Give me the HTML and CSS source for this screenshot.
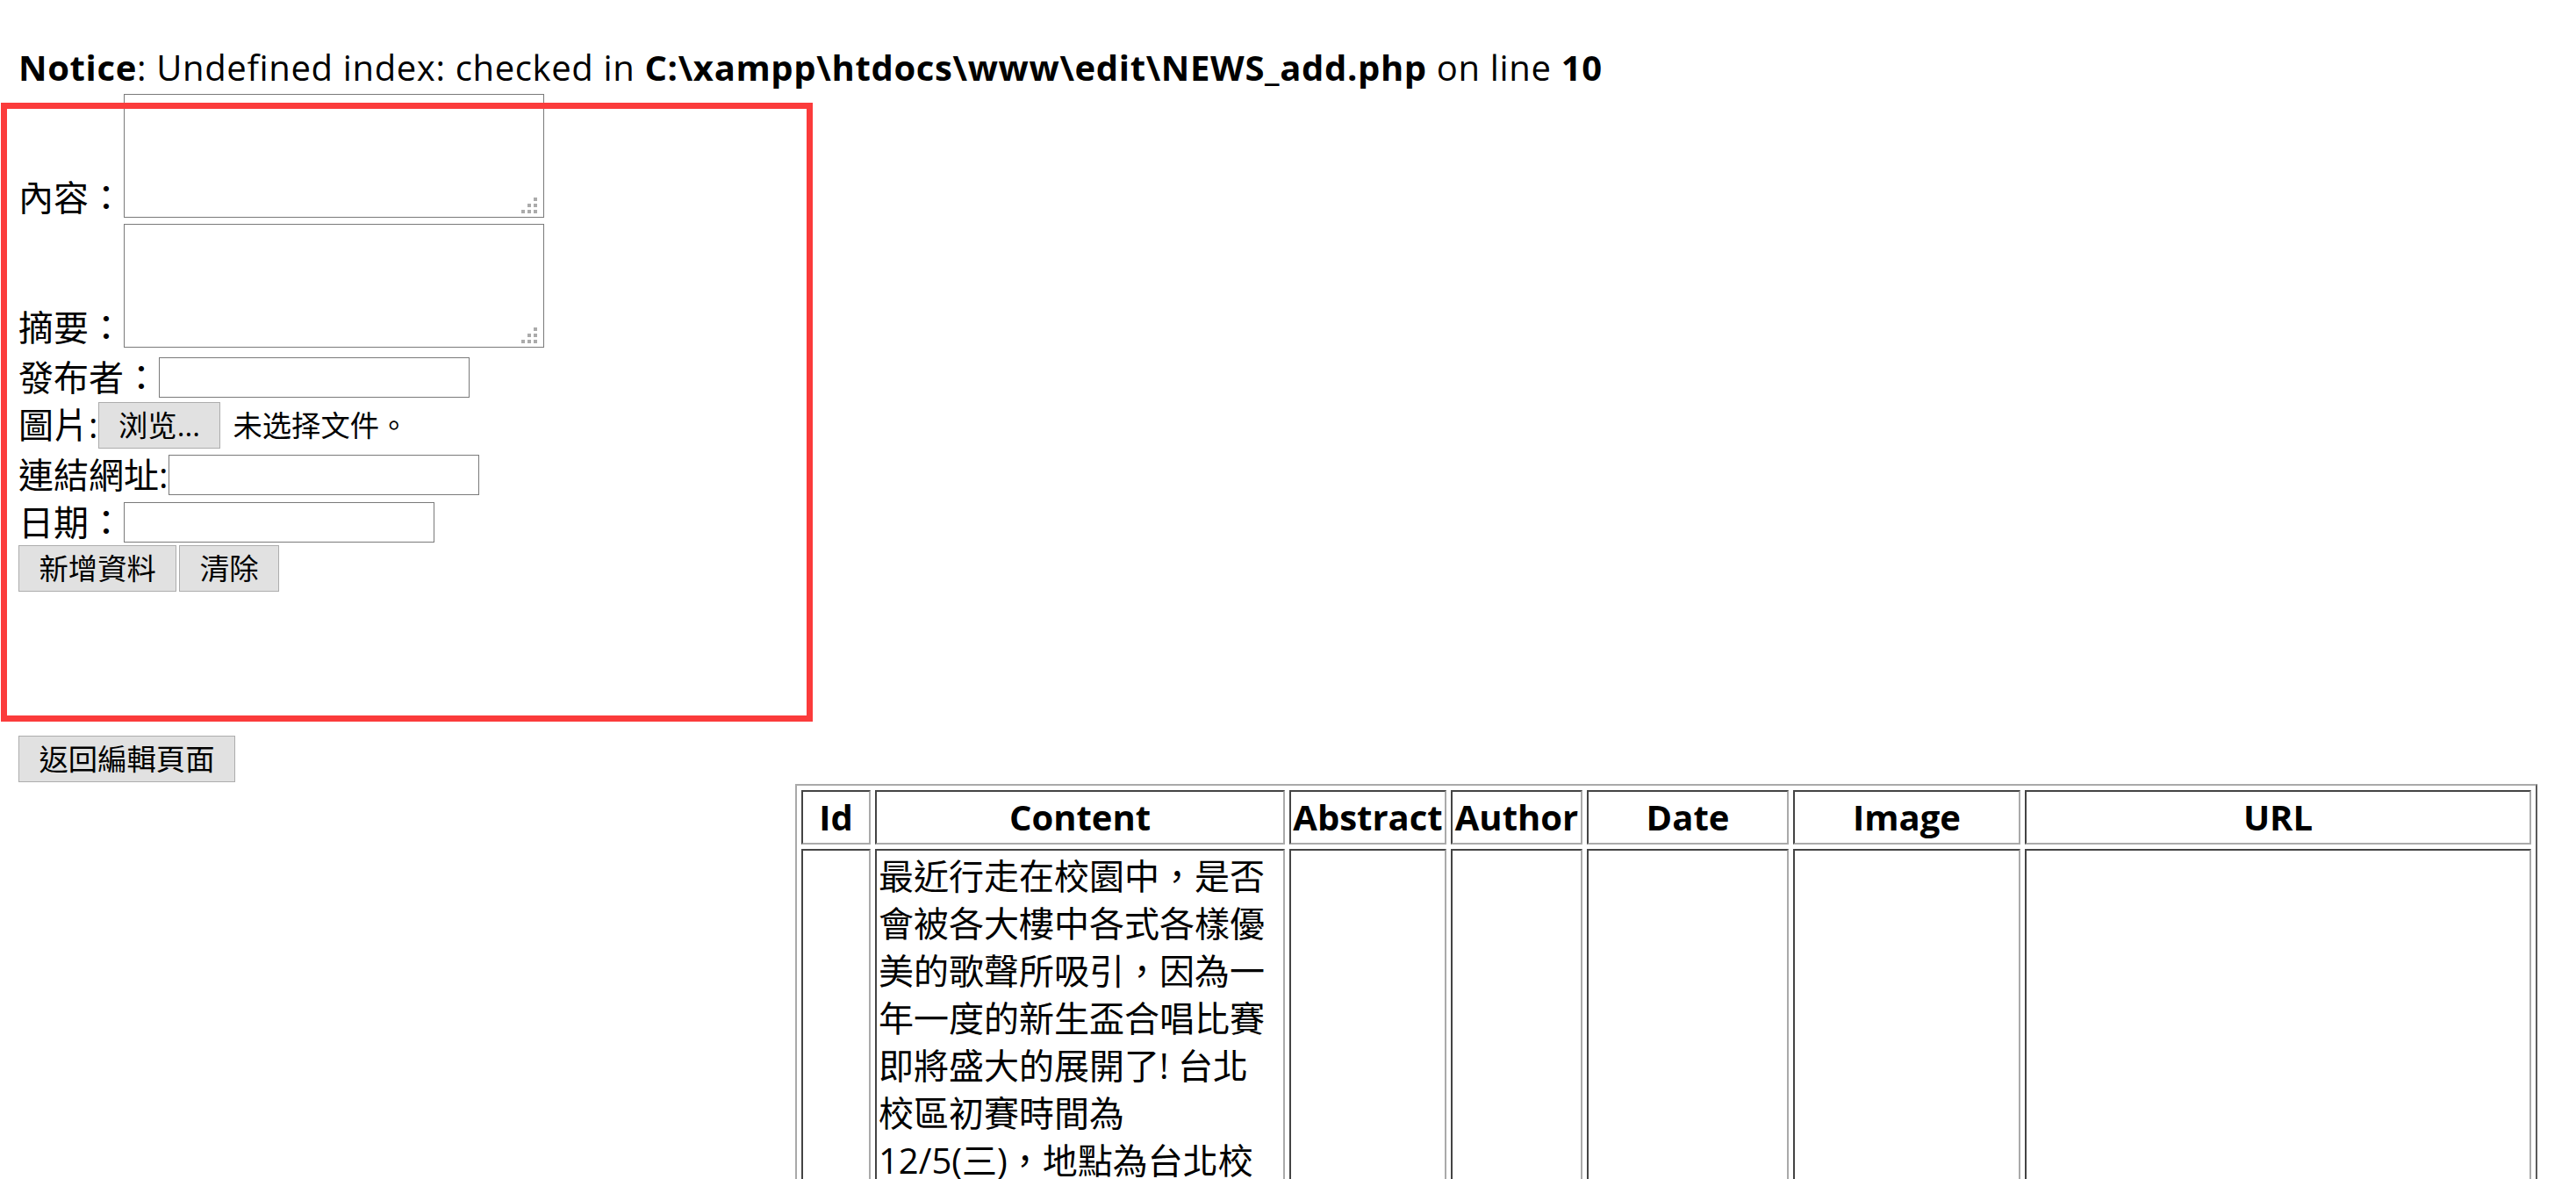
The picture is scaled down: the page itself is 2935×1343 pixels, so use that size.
FILE: index.html
```html
<!DOCTYPE html>
<html lang="zh-Hant">
<head>
<meta charset="utf-8">
<title>NEWS_add</title>
<link rel="stylesheet" href="styles.css">
</head>
<body>
<div class="notice"><b>Notice</b>: Undefined index: checked in <b>C:\xampp\htdocs\www\edit\NEWS_add.php</b> on line <b>10</b></div>

<form class="news-form">
  <div class="row row-area">
    <label class="lbl lbl-area">內容：</label>
    <span class="area-wrap">
      <textarea class="area"></textarea>
      <svg class="grip" width="18" height="18" viewBox="0 0 18 18"><rect x="14" y="0" width="4" height="4"/><rect x="7" y="7" width="4" height="4"/><rect x="14" y="7" width="4" height="4"/><rect x="0" y="14" width="4" height="4"/><rect x="7" y="14" width="4" height="4"/><rect x="14" y="14" width="4" height="4"/></svg>
    </span>
  </div>
  <div class="row row-area row-area2">
    <label class="lbl lbl-area">摘要：</label>
    <span class="area-wrap">
      <textarea class="area"></textarea>
      <svg class="grip" width="18" height="18" viewBox="0 0 18 18"><rect x="14" y="0" width="4" height="4"/><rect x="7" y="7" width="4" height="4"/><rect x="14" y="7" width="4" height="4"/><rect x="0" y="14" width="4" height="4"/><rect x="7" y="14" width="4" height="4"/><rect x="14" y="14" width="4" height="4"/></svg>
    </span>
  </div>
  <div class="row row-line r-author">
    <label class="lbl">發布者：</label><input class="txt" type="text">
  </div>
  <div class="row row-line r-image">
    <label class="lbl">圖片:</label><button type="button" class="btn">浏览...</button><span class="nofile">未选择文件。</span>
  </div>
  <div class="row row-line r-url">
    <label class="lbl">連結網址:</label><input class="txt" type="text">
  </div>
  <div class="row row-line r-date">
    <label class="lbl">日期：</label><input class="txt" type="text">
  </div>
  <div class="row r-actions">
    <button type="button" class="btn">新增資料</button><button type="button" class="btn">清除</button>
  </div>
</form>

<div class="annot"></div>

<div class="back-row"><button type="button" class="btn">返回編輯頁面</button></div>

<table class="news-table">
  <thead>
    <tr>
      <th class="c-id">Id</th>
      <th class="c-content">Content</th>
      <th class="c-abstract">Abstract</th>
      <th class="c-author">Author</th>
      <th class="c-date">Date</th>
      <th class="c-image">Image</th>
      <th class="c-url">URL</th>
    </tr>
  </thead>
  <tbody>
    <tr>
      <td></td>
      <td>最近行走在校園中，是否會被各大樓中各式各樣優美的歌聲所吸引，因為一年一度的新生盃合唱比賽即將盛大的展開了! 台北校區初賽時間為12/5(三)，地點為台北校區。</td>
      <td></td>
      <td></td>
      <td></td>
      <td></td>
      <td></td>
    </tr>
  </tbody>
</table>
</body>
</html>
```

FILE: styles.css
```css
html {
  overflow: hidden;
}

body {
  margin: 0;
  padding: 0 21px;
  font-family: "Open Sans", "Noto Sans CJK SC", sans-serif;
  font-size: 40px;
  line-height: 54px;
  color: #000;
  background: #fff;
}

.notice {
  padding-top: 50px;
  height: 54px;
  white-space: nowrap;
  letter-spacing: 0.65px;
}

.notice b {
  font-weight: 700;
}

.news-form {
  margin: 3px 0 0;
}

.row {
  display: flex;
}

.row-area {
  align-items: flex-end;
  height: 141px;
}

.row-area2 {
  margin-top: 7px;
}

.lbl-area {
  line-height: 46px;
}

.area-wrap {
  position: relative;
  display: block;
  height: 141px;
}

.area {
  display: block;
  box-sizing: border-box;
  width: 479px;
  height: 141px;
  margin: 0;
  padding: 2px;
  border: 1px solid #7a7a7a;
  resize: none;
  background: #fff;
  font: inherit;
}

.grip {
  position: absolute;
  right: 8px;
  bottom: 5px;
  fill: #ababab;
}

.row-line {
  align-items: center;
}

.r-author {
  margin-top: 7px;
  height: 54px;
}

.r-image {
  height: 54px;
}

.r-url {
  height: 60px;
}

.r-date {
  height: 48px;
}

.txt {
  box-sizing: border-box;
  width: 354px;
  height: 46px;
  margin: 0;
  padding: 1px 2px;
  border: 1px solid #7a7a7a;
  background: #fff;
  font: inherit;
  font-size: 33.33px;
}

.btn {
  box-sizing: border-box;
  height: 53px;
  margin: 0;
  padding: 0 22.5px;
  border: 1px solid #adadad;
  border-radius: 0;
  background: #e1e1e1;
  color: #000;
  font-family: "Open Sans", "Noto Sans CJK SC", sans-serif;
  font-size: 33.33px;
  line-height: 49px;
}

.nofile {
  margin-left: 14px;
  font-size: 33.33px;
}

.r-actions {
  margin-top: 2px;
  gap: 3px;
}

.back-row {
  display: flex;
  margin-top: 164px;
}

.annot {
  position: absolute;
  left: 1px;
  top: 117px;
  box-sizing: border-box;
  width: 925px;
  height: 705px;
  border: 7px solid #fb3b3b;
  pointer-events: none;
}

.news-table {
  margin: 2px 0 0 885px;
  table-layout: fixed;
  width: 1985px;
  border-collapse: separate;
  border-spacing: 5px;
  border: 2px solid;
  border-color: #a9a9a9 #5a5a5a #5a5a5a #a9a9a9;
}

.news-table th,
.news-table td {
  padding: 2px;
  border: 2px solid;
  border-color: #444 #aaa #aaa #444;
  line-height: 54px;
}

.news-table th {
  font-weight: 700;
  text-align: center;
  white-space: nowrap;
}

.news-table td {
  vertical-align: middle;
  text-align: left;
}

.c-id { width: 71px; }
.c-content { width: 459px; }
.c-abstract { width: 171px; }
.c-author { width: 142px; }
.c-date { width: 222px; }
.c-image { width: 251px; }
.c-url { width: 569px; }
```
